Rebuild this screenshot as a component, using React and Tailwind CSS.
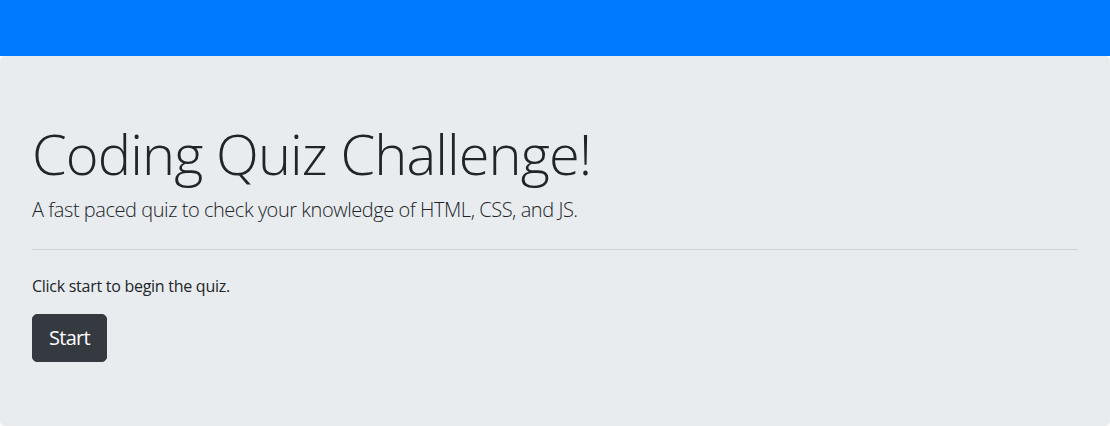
export default function App() {
  return (
    <div className="w-[1110px] h-[426px] overflow-hidden bg-white text-[#212529]" style={{ fontFamily: '"Open Sans", "Noto Sans", sans-serif' }}>
      <div className="h-[56px] bg-[#007bff]" />
      <div className="bg-[#e9ecef] rounded-[5px] px-8 py-16">
        <h1 className="text-[56px] leading-[1.2] font-light mb-2 tracking-[-0.9px]">Coding Quiz Challenge!</h1>
        <p className="text-[20px] leading-[1.5] font-light tracking-[-0.45px]">A fast paced quiz to check your knowledge of HTML, CSS, and JS.</p>
        <hr className="my-6 border-0 border-t border-[rgba(0,0,0,0.1)]" />
        <p className="text-[16px] leading-[1.5] mb-4 tracking-[-0.27px]">Click start to begin the quiz.</p>
        <button className="bg-[#343a40] border border-[#343a40] text-white text-[20px] leading-[1.5] px-4 py-2 rounded-[5px] tracking-[-0.7px]">Start</button>
      </div>
    </div>
  );
}
